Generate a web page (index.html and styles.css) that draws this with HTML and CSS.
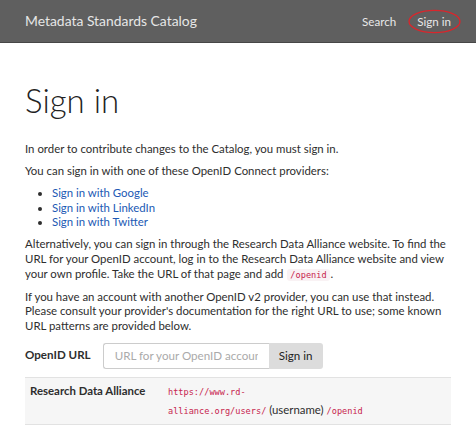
FILE: index.html
```
<!DOCTYPE html>
<html lang="en">
<head>
<meta charset="utf-8">
<title>Sign in - Metadata Standards Catalog</title>
<link rel="stylesheet" href="styles.css">
</head>
<body>
<header class="navbar">
  <a class="brand" href="#">Metadata Standards Catalog</a>
  <nav class="nav">
    <a class="nav-link" href="#">Search</a>
    <a class="nav-link nav-current" href="#">Sign in<svg class="ring" viewBox="0 0 56 26" aria-hidden="true"><ellipse cx="28" cy="13" rx="26.5" ry="11.5" fill="none" stroke="#d9262c" stroke-width="1.4"/></svg></a>
  </nav>
</header>
<main class="content">
  <h1 class="title">Sign in</h1>
  <p>In order to contribute changes to the Catalog, you must sign in.</p>
  <p>You can sign in with one of these OpenID Connect providers:</p>
  <ul class="providers">
    <li><a href="#">Sign in with Google</a></li>
    <li><a href="#">Sign in with LinkedIn</a></li>
    <li><a href="#">Sign in with Twitter</a></li>
  </ul>
  <p>Alternatively, you can sign in through the Research Data Alliance website. To find the URL for your OpenID account, log in to the Research Data Alliance website and view your own profile. Take the URL of that page and add <code class="inline">/openid</code>.</p>
  <p>If you have an account with another OpenID v2 provider, you can use that instead. Please consult your provider's documentation for the right URL to use; some known URL patterns are provided below.</p>
  <form class="openid-form">
    <label class="form-label" for="openid">OpenID URL</label>
    <div class="input-group">
      <input id="openid" class="form-input" type="text" placeholder="URL for your OpenID account">
      <button class="btn" type="button">Sign in</button>
    </div>
  </form>
  <table class="patterns">
    <tr>
      <th>Research Data Alliance</th>
      <td><code>https://www.rd-<br>alliance.org/users/</code> (username) <code>/openid</code></td>
    </tr>
  </table>
</main>
</body>
</html>
```
FILE: styles.css
```
* { box-sizing: border-box; }
html, body { margin: 0; padding: 0; }
body {
  font-family: Lato, "Open Sans", "Liberation Sans", sans-serif;
  font-size: 11.4px;
  line-height: 14.6px;
  color: #2e2e2e;
  background: #fff;
}
a { text-decoration: none; }
.navbar {
  height: 43px;
  background: #5f5f5f;
  border-bottom: 1px solid #474747;
  display: flex;
  align-items: center;
  justify-content: space-between;
  padding: 0 25px;
}
.brand {
  color: #e6e6e6;
  font-size: 13.9px;
  line-height: 18px;
}
.nav { display: flex; gap: 21px; align-items: center; }
.nav-link { color: #e8e8e8; font-size: 11.6px; line-height: 15px; position: relative; }
.ring {
  position: absolute;
  left: -10px;
  top: -4.5px;
  width: 55px;
  height: 25px;
}
.content { padding: 41px 25px 0; }
.title {
  font-weight: 300;
  font-size: 33px;
  line-height: 1;
  margin: 0 0 25px;
  color: #222;
}
p { margin: 0 0 7.5px; }
.providers { margin: 0 0 7.5px; padding-left: 27px; }
.providers a { color: #2159b4; }
code {
  font-family: "DejaVu Sans Mono", "Liberation Mono", monospace;
  font-size: 8.6px;
  color: #c7254e;
}
code.inline {
  background: #f9f2f4;
  padding: 1px 3px;
  margin: 0 1px;
  border-radius: 3px;
}
.openid-form {
  display: flex;
  align-items: center;
  gap: 12px;
  margin: 9px 0 8px;
}
.form-label { font-weight: 700; font-size: 11.6px; }
.input-group { display: flex; height: 26px; }
.form-input {
  width: 166px;
  border: 1px solid #ccc;
  border-right: none;
  border-radius: 3px 0 0 3px;
  padding: 0 11px;
  font-family: inherit;
  font-size: 11.6px;
  color: #555;
}
.form-input::placeholder { color: #aaa; }
.btn {
  border: none;
  background: #dcdcdc;
  border-radius: 0 3px 3px 0;
  width: 54px;
  padding: 0;
  font-family: inherit;
  font-size: 11.6px;
  color: #222;
}
.patterns {
  width: 100%;
  border-collapse: collapse;
  border-top: 1px solid #e2e2e2;
  border-bottom: 1px solid #e2e2e2;
  background: #f6f6f6;
}
.patterns th, .patterns td {
  vertical-align: top;
  text-align: left;
  padding: 4px 6px;
  line-height: 17px;
}
.patterns th { width: 137px; padding-left: 5px; }
```
